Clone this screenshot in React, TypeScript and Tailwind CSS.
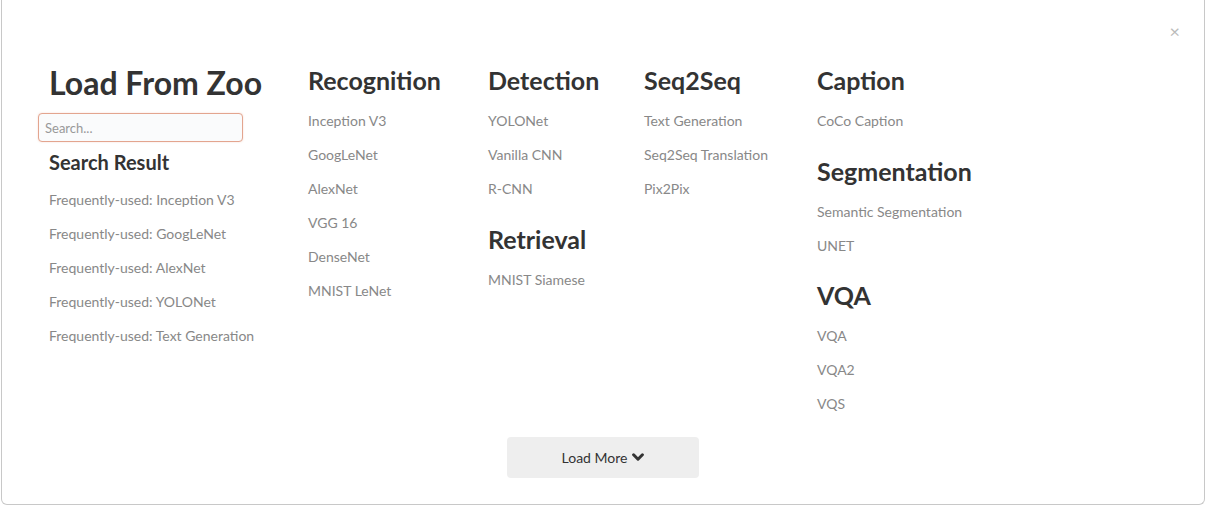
type Group = { title: string; items: string[] };

const columns: { width: string; groups: Group[] }[] = [
  {
    width: 'w-[180px]',
    groups: [{ title: 'Recognition', items: ['Inception V3', 'GoogLeNet', 'AlexNet', 'VGG 16', 'DenseNet', 'MNIST LeNet'] }],
  },
  {
    width: 'w-[156px]',
    groups: [
      { title: 'Detection', items: ['YOLONet', 'Vanilla CNN', 'R-CNN'] },
      { title: 'Retrieval', items: ['MNIST Siamese'] },
    ],
  },
  {
    width: 'w-[173px]',
    groups: [{ title: 'Seq2Seq', items: ['Text Generation', 'Seq2Seq Translation', 'Pix2Pix'] }],
  },
  {
    width: 'w-[200px]',
    groups: [
      { title: 'Caption', items: ['CoCo Caption'] },
      { title: 'Segmentation', items: ['Semantic Segmentation', 'UNET'] },
      { title: 'VQA', items: ['VQA', 'VQA2', 'VQS'] },
    ],
  },
];

const recent = ['Inception V3', 'GoogLeNet', 'AlexNet', 'YOLONet', 'Text Generation'];

function Item({ label }: { label: string }) {
  return <div className="h-[34px] leading-[34px] text-[14px] text-[#888] cursor-pointer whitespace-nowrap">{label}</div>;
}

export default function App() {
  return (
    <div className="w-[1206px] h-[505px] bg-white" style={{ fontFamily: 'Lato, "Open Sans", sans-serif' }}>
      <div className="relative h-[505px] ml-px mr-px border border-t-0 border-[#c8c8c8] rounded-b-[6px] pt-[58px] pl-[47px]">
        <button className="absolute top-[22px] right-[24px] text-[18px] leading-none text-[#bbb]">×</button>

        <div className="flex items-start">
          <div className="w-[259px] flex flex-col">
            <h1 className="h-[49px] leading-[49px] text-[32px] font-bold text-[#333] whitespace-nowrap">Load From Zoo</h1>
            <input
              placeholder="Search..."
              className="mt-[6px] -ml-[11px] w-[205px] h-[29px] px-[6px] text-[13px] text-[#555] placeholder:text-[#999] bg-[#fafbfc] border border-[#e3a58f] rounded-[4px] outline-none shadow-[0_0_2px_rgba(230,150,120,0.35)]"
            />
            <h3 className="h-[41px] leading-[41px] text-[20px] font-bold text-[#333]">Search Result</h3>
            {recent.map((r) => (
              <Item key={r} label={`Frequently-used: ${r}`} />
            ))}
          </div>

          {columns.map((col, ci) => (
            <div key={ci} className={`${col.width} flex flex-col`}>
              {col.groups.map((g, gi) => (
                <div key={g.title} className={gi > 0 ? 'mt-[10.5px]' : ''}>
                  <h2 className="h-[46px] leading-[45px] text-[25px] font-bold text-[#333] whitespace-nowrap">{g.title}</h2>
                  {g.items.map((it) => (
                    <Item key={it} label={it} />
                  ))}
                </div>
              ))}
            </div>
          ))}
        </div>

        <div className="flex justify-center -ml-[47px] mt-[16px]">
          <button className="w-[192px] h-[41px] rounded-[4px] bg-[#eeeeee] text-[14px] text-[#333] flex items-center justify-center gap-[5px]">
            Load More
            <svg width="12" height="9" viewBox="0 0 12 9" className="mb-[1px]">
              <polyline points="1.6,1.8 6,6.2 10.4,1.8" fill="none" stroke="#333" strokeWidth="3" strokeLinecap="round" strokeLinejoin="round" />
            </svg>
          </button>
        </div>
      </div>
    </div>
  );
}
